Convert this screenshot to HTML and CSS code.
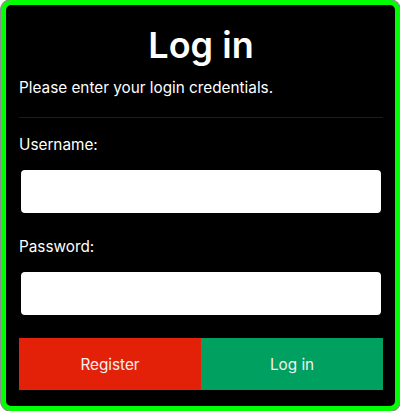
FILE: index.html
```html
<!DOCTYPE html>
<html lang="en">
<head>
<meta charset="utf-8">
<title>Log in</title>
<link rel="stylesheet" href="styles.css">
</head>
<body>
<div class="card">
  <h1 class="title">Log in</h1>
  <p class="subtitle">Please enter your login credentials.</p>
  <hr class="sep">
  <form class="form">
    <label class="label" for="username">Username:</label>
    <input class="input" id="username" type="text">
    <label class="label label-gap" for="password">Password:</label>
    <input class="input" id="password" type="password">
    <div class="actions">
      <button type="button" class="btn btn-register">Register</button>
      <button type="button" class="btn btn-login">Log in</button>
    </div>
  </form>
</div>
</body>
</html>
```
FILE: styles.css
```css
html, body {
  margin: 0;
  padding: 0;
  background: #ffffff;
}

body {
  font-family: Inter, "Liberation Sans", Arial, sans-serif;
  color: #ffffff;
}

.card {
  box-sizing: border-box;
  width: 399px;
  height: 411px;
  margin-left: 1px;
  background: #000000;
  border: 5px solid #00ff00;
  border-radius: 10px;
  box-shadow: 0 0 0 1px #8c8c8c;
  padding: 19px 12px 16px 13px;
  display: flex;
  flex-direction: column;
}

.title {
  margin: 0;
  font-size: 36px;
  line-height: 42px;
  font-weight: 600;
  text-align: center;
}

.subtitle {
  margin: 13px 0 0;
  font-size: 15.3px;
  line-height: 18px;
}

.sep {
  margin: 20px 0 0;
  border: 0;
  height: 1px;
  background: #1c1c1c;
}

.form {
  display: flex;
  flex-direction: column;
}

.label {
  display: block;
  margin-top: 18px;
  font-size: 15.3px;
  line-height: 18px;
}

.label-gap {
  margin-top: 25px;
}

.input {
  box-sizing: border-box;
  margin: 16px 2px 0;
  height: 43px;
  border: 0;
  border-radius: 4px;
  background: #ffffff;
  padding: 0 10px;
  font-size: 16px;
  font-family: inherit;
}

.actions {
  display: flex;
  margin-top: 23px;
}

.btn {
  flex: 1;
  height: 52px;
  border: 0;
  border-radius: 0;
  font-family: inherit;
  font-size: 15.3px;
  color: #f2f2f2;
  cursor: pointer;
}

.btn-register {
  background: #e32008;
}

.btn-login {
  background: #00a060;
}
```
